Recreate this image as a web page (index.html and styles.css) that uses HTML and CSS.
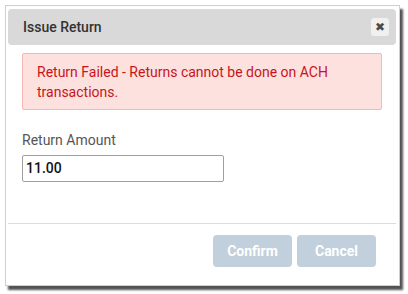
FILE: index.html
```html
<!DOCTYPE html>
<html>
<head>
<meta charset="utf-8">
<link rel="stylesheet" href="styles.css">
</head>
<body>
<div class="backdrop">
  <div class="dialog">
    <div class="header">
      <span class="title">Issue Return</span>
      <button class="close">&#x2716;</button>
    </div>
    <div class="content">
      <div class="alert">Return Failed - Returns cannot be done on ACH transactions.</div>
      <label class="label">Return Amount</label>
      <div class="input">11.00</div>
    </div>
    <div class="footer">
      <button class="btn">Confirm</button>
      <button class="btn">Cancel</button>
    </div>
  </div>
</div>
</body>
</html>
```
FILE: styles.css
```css
html, body {
  margin: 0;
  padding: 0;
  background: #ffffff;
}
body {
  font-family: Roboto, "Liberation Sans", sans-serif;
  width: 408px;
  height: 294px;
  overflow: hidden;
}
.backdrop {
  padding: 5px 0 0 5px;
}
.dialog {
  border: 1px solid #cfcfcf;
  background: #fff;
  padding: 3px 3px 0 2px;
  box-shadow: 3px 4px 2px rgba(40, 40, 40, 0.8);
  display: flex;
  flex-direction: column;
  box-sizing: border-box;
  width: 395px;
  height: 281px;
}
.header {
  height: 36px;
  background: #d9d9d9;
  border-radius: 4px;
  display: flex;
  align-items: center;
  justify-content: space-between;
  padding: 0 7px 0 15px;
}
.title {
  font-size: 14px;
  font-weight: 500;
  color: #333;
}
.close {
  width: 18px;
  height: 18px;
  border: none;
  border-radius: 3px;
  background: #f0f0f0;
  color: #4a4a4a;
  font-size: 12px;
  font-weight: bold;
  padding: 0;
  line-height: 18px;
  text-align: center;
  font-family: "DejaVu Sans", sans-serif;
}
.content {
  padding: 8px 14px 0 14px;
  display: flex;
  flex-direction: column;
  align-items: flex-start;
  height: 179px;
  box-sizing: border-box;
  border-bottom: 1px solid #dcdcdc;
}
.alert {
  align-self: stretch;
  background: #fde1df;
  border: 1px solid #f6b8b5;
  border-radius: 2px;
  color: #c9141a;
  font-size: 14px;
  line-height: 20px;
  padding: 8px 14px 7px 14px;
}
.label {
  margin-top: 20px;
  font-size: 14px;
  line-height: 20px;
  color: #555;
}
.input {
  margin-top: 5px;
  width: 202px;
  height: 27px;
  box-sizing: border-box;
  border: 1px solid #a0a0a0;
  border-radius: 2px;
  font-size: 14px;
  font-weight: 500;
  color: #111;
  line-height: 25px;
  padding-left: 3px;
}
.footer {
  display: flex;
  justify-content: flex-end;
  gap: 5px;
  padding: 11px 20px 0 0;
}
.btn {
  width: 79px;
  height: 32px;
  border: none;
  border-radius: 4px;
  background: #c2cfdc;
  color: #fff;
  font-family: Roboto, "Liberation Sans", sans-serif;
  font-size: 14px;
  font-weight: bold;
  padding: 0;
}
```
